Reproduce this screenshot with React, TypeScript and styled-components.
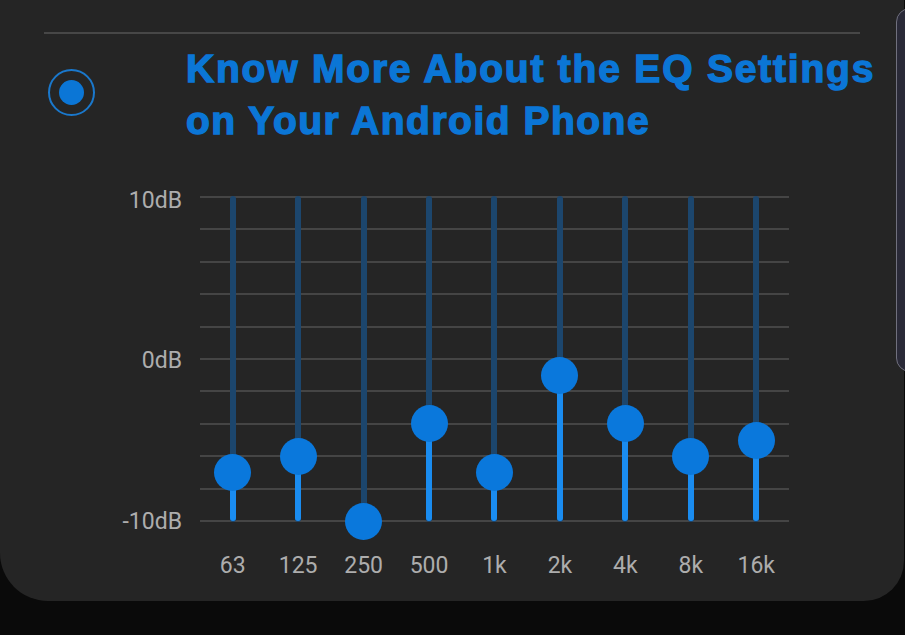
import React from 'react';
import styled, { createGlobalStyle } from 'styled-components';

type Band = { label: string; gain: number };

const bands: Band[] = [
  { label: '63', gain: -7 },
  { label: '125', gain: -6 },
  { label: '250', gain: -10 },
  { label: '500', gain: -4 },
  { label: '1k', gain: -7 },
  { label: '2k', gain: -1 },
  { label: '4k', gain: -4 },
  { label: '8k', gain: -6 },
  { label: '16k', gain: -5 },
];

const PLOT_HEIGHT = 326;
const LINE_COUNT = 11;

// centre of the gridline for a gain in dB (+10 at top, -10 at bottom)
const gainToY = (gain: number) => 1 + ((10 - gain) / 20) * (PLOT_HEIGHT - 2);

const App: React.FC = () => {
  return (
    <>
      <GlobalStyle />
      <Screen>
        <Card>
          <Divider />
          <Header>
            <Radio>
              <RadioDot />
            </Radio>
            <Title>
              <TitleLine $spacing={1.8}>Know More About the EQ Settings</TitleLine>
              <TitleLine $spacing={1.5}>on Your Android Phone</TitleLine>
            </Title>
          </Header>
          <Chart>
            <Scale>
              <ScaleLabel>10dB</ScaleLabel>
              <ScaleLabel>0dB</ScaleLabel>
              <ScaleLabel>-10dB</ScaleLabel>
            </Scale>
            <Plot>
              <Grid>
                {Array.from({ length: LINE_COUNT }).map((_, i) => (
                  <GridLine key={i} />
                ))}
              </Grid>
              <Sliders>
                {bands.map((band) => {
                  const y = gainToY(band.gain);
                  return (
                    <SliderColumn key={band.label}>
                      <Track />
                      <TrackFill style={{ top: y, height: PLOT_HEIGHT - 1 - y }} />
                      <Thumb style={{ top: y }} />
                    </SliderColumn>
                  );
                })}
              </Sliders>
            </Plot>
            <Spacer />
            <FreqRow>
              {bands.map((band) => (
                <FreqLabel key={band.label}>{band.label}</FreqLabel>
              ))}
            </FreqRow>
          </Chart>
        </Card>
        <SidePanel />
      </Screen>
    </>
  );
};

const GlobalStyle = createGlobalStyle`
  html, body {
    margin: 0;
    padding: 0;
    background: #0a0a0a;
  }

  body {
    font-family: Roboto, "Noto Sans", sans-serif;
  }
`;

const Screen = styled.div`
  position: relative;
  width: 905px;
  height: 635px;
  overflow: hidden;
  background: #0a0a0a;
`;

const Card = styled.div`
  width: 904px;
  height: 601px;
  padding-top: 32px;
  box-sizing: border-box;
  background: #252525;
  border-radius: 0 0 40px 48px;
`;

const Divider = styled.div`
  margin-left: 44px;
  width: 816px;
  height: 2px;
  background: #474747;
`;

const Header = styled.div`
  display: flex;
  align-items: flex-start;
  margin-top: 9px;
  padding-left: 48px;
  gap: 91px;
`;

const Radio = styled.div`
  display: flex;
  align-items: center;
  justify-content: center;
  margin-top: 26px;
  width: 47px;
  height: 47px;
  box-sizing: border-box;
  border: 2px solid #1a78cc;
  border-radius: 50%;
`;

const RadioDot = styled.div`
  width: 25px;
  height: 25px;
  border-radius: 50%;
  background: #0b76d6;
`;

const Title = styled.h1`
  margin: 0;
  font-family: "Liberation Sans", Arial, sans-serif;
  font-weight: 700;
  font-size: 39px;
  line-height: 52px;
  color: #0b76d6;
  -webkit-text-stroke: 1.4px #0b76d6;
  white-space: nowrap;
`;

const TitleLine = styled.span<{ $spacing: number }>`
  display: block;
  letter-spacing: ${(p) => p.$spacing}px;
`;

const Chart = styled.div`
  display: grid;
  grid-template-columns: 200px 589px;
  margin-top: 49px;
`;

const Scale = styled.div`
  display: flex;
  flex-direction: column;
  justify-content: space-between;
  align-items: flex-end;
  height: ${PLOT_HEIGHT}px;
  padding-right: 18px;
`;

const ScaleLabel = styled.div`
  display: flex;
  align-items: center;
  height: 2px;
  padding-top: 3px;
  font-size: 23px;
  color: #adadad;
  white-space: nowrap;
`;

const Plot = styled.div`
  display: grid;
  height: ${PLOT_HEIGHT}px;

  & > * {
    grid-area: 1 / 1;
  }
`;

const Grid = styled.div`
  display: flex;
  flex-direction: column;
  justify-content: space-between;
`;

const GridLine = styled.div`
  height: 2px;
  background: #454545;
`;

const Sliders = styled.div`
  display: grid;
  grid-template-columns: repeat(9, 1fr);
`;

const SliderColumn = styled.div`
  position: relative;
`;

const Track = styled.div`
  position: absolute;
  top: 0;
  bottom: 0;
  left: 50%;
  width: 6px;
  margin-left: -3px;
  border-radius: 3px;
  background: #1c466d;
`;

const TrackFill = styled.div`
  position: absolute;
  left: 50%;
  width: 6px;
  margin-left: -3px;
  border-radius: 3px;
  background: #1a8cf0;
`;

const Thumb = styled.div`
  position: absolute;
  left: 50%;
  width: 37px;
  height: 37px;
  margin: -18.5px 0 0 -18.5px;
  border-radius: 50%;
  background: #0a78dc;
`;

const Spacer = styled.div``;

const FreqRow = styled.div`
  display: grid;
  grid-template-columns: repeat(9, 1fr);
  margin-top: 31px;
`;

const FreqLabel = styled.div`
  text-align: center;
  font-size: 23px;
  line-height: 26px;
  color: #adadad;
`;

const SidePanel = styled.div`
  position: absolute;
  top: 8px;
  left: 896px;
  width: 30px;
  height: 364px;
  box-sizing: border-box;
  border: 1.5px solid #70707e;
  border-radius: 14px;
  background: #2a2a38;
`;

export default App;
